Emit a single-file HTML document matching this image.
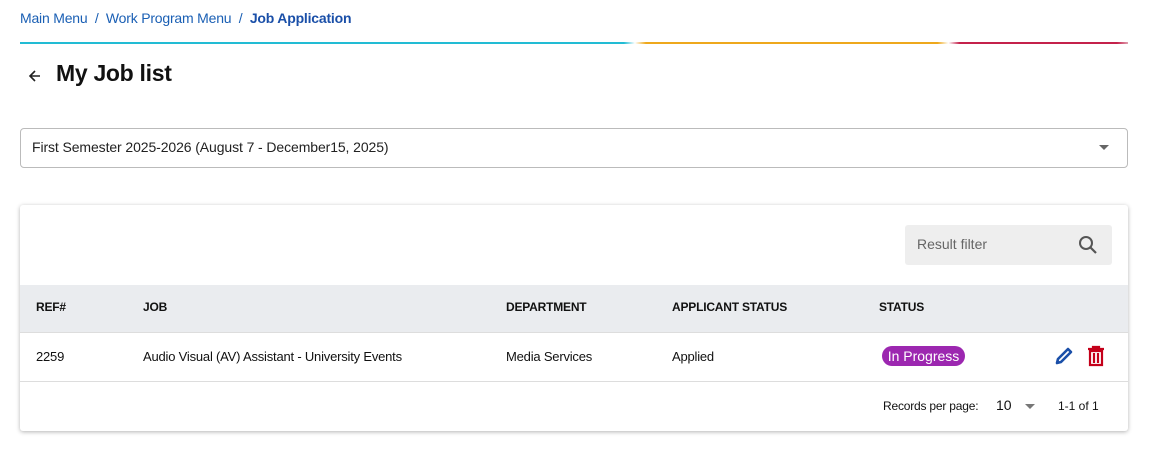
<!DOCTYPE html>
<html><head><style>
body{margin:0;width:1153px;height:472px;background:#fff;font-family:"Liberation Sans",sans-serif;position:relative;overflow:hidden;color:#222}
.a{position:absolute}
.bc{left:20px;top:10px;font-size:14px;color:#1a5fb4;letter-spacing:-0.2px}
.bc b{color:#1a4fa8}
.bar{top:42px;height:2px}
.card{left:20px;top:205px;width:1108px;height:226px;box-shadow:0 1px 4px rgba(0,0,0,.3);border-radius:3px;background:#fff}
.hd{font-size:12px;font-weight:bold;color:#111;letter-spacing:-0.2px}
.cell{font-size:13px;color:#111;letter-spacing:-0.2px}
</style></head><body>
<div class="a bc">Main Menu &nbsp;/&nbsp; Work Program Menu &nbsp;/&nbsp; <b>Job Application</b></div>
<div class="a bar" style="left:20px;width:1108px;background:linear-gradient(90deg,#22bcd4 0,#22bcd4 54.5%,#fff 55.5%,#eea81c 56.5%,#eea81c 82.8%,#fff 83.8%,#c4214b 84.8%,#c4214b 99%,#e0a0b0 100%)"></div>
<svg class="a" style="left:27px;top:68px" width="16" height="16" viewBox="0 0 16 16"><path d="M13 8H3M8 3L3 8l5 5" stroke="#222" stroke-width="1.6" fill="none"/></svg>
<div class="a" style="left:56px;top:60px;font-size:23px;font-weight:bold;color:#111;letter-spacing:-0.3px">My Job list</div>
<div class="a" style="left:20px;top:128px;width:1106px;height:38px;border:1px solid #bbb;border-radius:4px"></div>
<div class="a" style="left:32px;top:139px;font-size:14px;color:#222;letter-spacing:-0.1px">First Semester 2025-2026 (August 7 - December15, 2025)</div>
<div class="a" style="left:1099px;top:145px;width:0;height:0;border-left:5px solid transparent;border-right:5px solid transparent;border-top:5px solid #666"></div>
<div class="a card"></div>
<div class="a" style="left:905px;top:225px;width:207px;height:40px;background:#eeeeee;border-radius:3px"></div>
<div class="a" style="left:917px;top:236px;font-size:14px;color:#666">Result filter</div>
<svg class="a" style="left:1077px;top:234px" width="22" height="22" viewBox="0 0 22 22"><circle cx="9" cy="9" r="6" stroke="#555" stroke-width="2" fill="none"/><path d="M13.5 13.5L19 19" stroke="#555" stroke-width="2.2"/></svg>
<div class="a" style="left:20px;top:285px;width:1108px;height:47px;background:#eaecef;border-bottom:1px solid #ddd"></div>
<div class="a hd" style="left:36px;top:300px">REF#</div>
<div class="a hd" style="left:143px;top:300px">JOB</div>
<div class="a hd" style="left:506px;top:300px">DEPARTMENT</div>
<div class="a hd" style="left:672px;top:300px">APPLICANT STATUS</div>
<div class="a hd" style="left:879px;top:300px">STATUS</div>
<div class="a cell" style="left:36px;top:349px">2259</div>
<div class="a cell" style="left:143px;top:349px">Audio Visual (AV) Assistant - University Events</div>
<div class="a cell" style="left:506px;top:349px">Media Services</div>
<div class="a cell" style="left:672px;top:349px">Applied</div>
<div class="a" style="left:882px;top:346px;width:83px;height:20px;border-radius:10px;background:#9c27b0;color:#fff;font-size:14px;line-height:20px;text-align:center">In Progress</div>
<svg class="a" style="left:1053px;top:345px" width="22" height="22" viewBox="0 0 22 22"><path d="M4 18l1-4L15 4l3 3L8 17z" stroke="#1a4fa8" stroke-width="2.6" fill="none" stroke-linejoin="round"/></svg>
<svg class="a" style="left:1086px;top:345px" width="20" height="22" viewBox="0 0 20 22"><path d="M2 4h16M7 4V2h6v2M4 6h12v14H4z M8 8v10M12 8v10" stroke="#c4001a" stroke-width="2.2" fill="none"/></svg>
<div class="a" style="left:20px;top:381px;width:1108px;height:1px;background:#ddd"></div>
<div class="a" style="left:883px;top:399px;font-size:12px;color:#111;letter-spacing:-0.2px">Records per page:</div>
<div class="a" style="left:996px;top:397px;font-size:14px;color:#111">10</div>
<div class="a" style="left:1025px;top:404px;border-left:5px solid transparent;border-right:5px solid transparent;border-top:5px solid #777"></div>
<div class="a" style="left:1058px;top:399px;font-size:12px;color:#111">1-1 of 1</div>
</body></html>
